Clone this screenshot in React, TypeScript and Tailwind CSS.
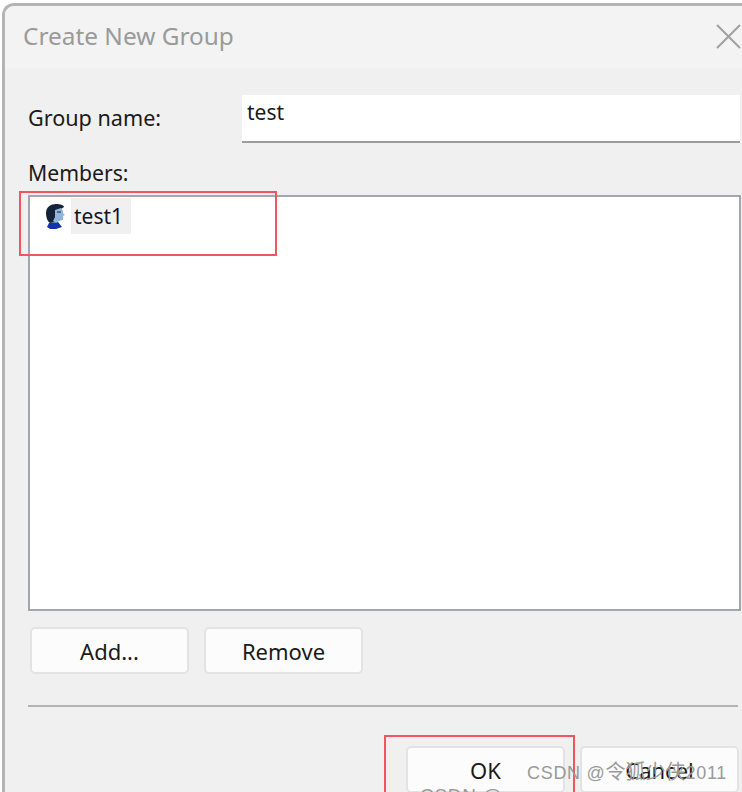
const font = "font-['Noto_Sans','Open_Sans',sans-serif]";

function Btn({ label }: { label: string }) {
  return (
    <div className="w-[159px] h-[47px] shrink-0 rounded-[5px] border-2 border-[#e3e3e3] bg-[#fcfcfc] flex items-center justify-center text-[22px] leading-none text-[#1a1a1a]">
      {label}
    </div>
  );
}

function UserIcon() {
  return (
    <svg width="21" height="25" viewBox="0 0 21 25" className="shrink-0">
      <path d="M3 23 L5 19 L14 18 L18 23 L12 25 L6 25 Z" fill="#1433a8" />
      <path d="M2 9 C2 3 7 0 12 0 C16 0 20 1 20 3 L17 5 L12 7 L11 13 L11 18 L6 19 C3 17 2 13 2 9 Z" fill="#14233a" />
      <path d="M11 6 L17 4 L19 7 L19 9 L21 11 L19 12 L19 16 L15 17 L12 19 L9 17 L11 13 Z" fill="#8fb6d8" />
      <path d="M13 8 L17 8" stroke="#14233a" strokeWidth="1" />
    </svg>
  );
}

export default function App() {
  return (
    <div className={`relative w-[742px] h-[792px] overflow-hidden bg-white pl-[2px] pt-[3px] ${font}`}>
      <div className="w-[760px] h-[800px] rounded-tl-[12px] border-l-[3px] border-t-[3px] border-[#b4b4b4] bg-[#f0f0f0] overflow-hidden">
        <div className="h-[62px] pb-[2px] bg-[#f3f3f3] flex items-center justify-between pl-[18px] pr-[20px] w-[737px]">
          <span className="text-[24.4px] leading-none text-[#9a9a9a]">Create New Group</span>
          <svg width="25" height="25" viewBox="0 0 25 25" className="mr-[-19px]">
            <path d="M1 1 L24 24 M24 1 L1 24" stroke="#a0a0a0" strokeWidth="2" />
          </svg>
        </div>
        <div className="w-[737px] pl-[23px] pt-[27px] flex flex-col">
          <div className="flex h-[48px]">
            <div className="w-[214px] text-[21.6px] leading-none pt-[12px] text-[#1a1a1a]">Group name:</div>
            <div className="w-[498px] h-[48px] bg-white border-b-2 border-[#9c9c9c] text-[21px] leading-none pl-[5px] pt-[7px] text-[#1a1a1a]">test</div>
          </div>
          <div className="h-[52px] pt-[19px] text-[21.2px] leading-none text-[#1a1a1a]">Members:</div>
          <div className="w-[713px] h-[416px] bg-white border-2 border-[#a3a7ad] pl-[14px] pt-[1px]">
            <div className="flex items-center gap-[6px]">
              <UserIcon />
              <span className="w-[60px] h-[36px] bg-[#f0f0f0] pl-[3px] flex items-center text-[21px] leading-none text-[#14141e]">test1</span>
            </div>
          </div>
          <div className="flex gap-[15px] pl-[2px] pt-[16px]">
            <Btn label="Add..." />
            <Btn label="Remove" />
          </div>
          <div className="mt-[31px] w-[710px] h-[2px] bg-[#b3b3b3]" />
          <div className="flex gap-[15px] pl-[378px] pt-[39px]">
            <Btn label="OK" />
            <Btn label="Cancel" />
          </div>
        </div>
      </div>

      <div className="absolute left-[19px] top-[191px] w-[258px] h-[65px] border-2 border-[#f2555f]" />
      <div className="absolute left-[384px] top-[735px] w-[191px] h-[70px] border-2 border-[#f2555f]" />
      <div className="absolute left-[527px] top-[759px] text-[18px] leading-[26px] tracking-[0.7px] whitespace-nowrap text-[#9a9a9a] font-['Liberation_Sans','Noto_Sans_CJK_SC',sans-serif]">
        CSDN @<span className="text-[20px] tracking-normal">令狐少侠</span>2011
      </div>
      <div className="absolute left-[420px] top-[783px] text-[19px] leading-[26px] tracking-[0.7px] whitespace-nowrap text-[#9a9a9a] font-['Liberation_Sans',sans-serif]">CSDN @</div>
    </div>
  );
}
